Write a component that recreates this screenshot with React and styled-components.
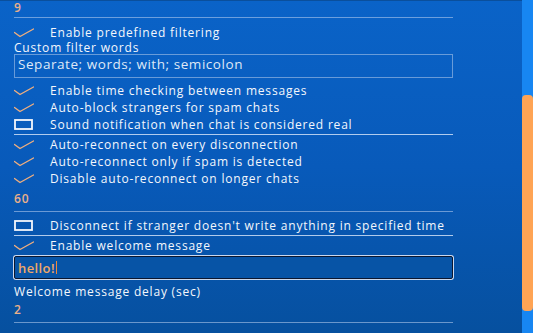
import React from 'react';
import styled, { createGlobalStyle } from 'styled-components';

const GlobalStyle = createGlobalStyle`
  html, body {
    margin: 0;
    padding: 0;
    overflow: hidden;
  }
  body {
    font-family: "Open Sans", "DejaVu Sans", sans-serif;
  }
`;

const Tick = () => (
  <svg width="20" height="10" viewBox="0 0 20 10">
    <path d="M0.5 4.5 L6 8.5 L19.5 1" fill="none" stroke="#f0ae7e" strokeWidth="1.4" strokeLinecap="round" strokeLinejoin="round" />
  </svg>
);

const EmptyBox = () => (
  <svg width="19" height="11" viewBox="0 0 19 11">
    <rect x="1" y="1" width="17" height="9" fill="none" stroke="#f4f7fc" strokeWidth="1.8" />
  </svg>
);

const Check = ({ checked, label, top }) => (
  <CheckRow $top={top}>
    <Indicator>{checked ? <Tick /> : <EmptyBox />}</Indicator>
    <span>{label}</span>
  </CheckRow>
);

const App = () => (
  <>
    <GlobalStyle />
    <Screen>
      <Panel>
        <NumberField $first>9</NumberField>
        <Check checked top={6} label="Enable predefined filtering" />
        <FieldLabel $top={1}>Custom filter words</FieldLabel>
        <TextBox>Separate; words; with; semicolon</TextBox>
        <Check checked top={4} label="Enable time checking between messages" />
        <Check checked label="Auto-block strangers for spam chats" />
        <Check label="Sound notification when chat is considered real" />
        <Divider />
        <Check checked top={1} label="Auto-reconnect on every disconnection" />
        <Check checked label="Auto-reconnect only if spam is detected" />
        <Check checked label="Disable auto-reconnect on longer chats" />
        <NumberField>60</NumberField>
        <Check top={5} label="Disconnect if stranger doesn't write anything in specified time" />
        <Divider />
        <Check checked top={1} label="Enable welcome message" />
        <FocusedInput>
          hello!<Caret />
        </FocusedInput>
        <FieldLabel $top={7}>Welcome message delay (sec)</FieldLabel>
        <NumberField>2</NumberField>
      </Panel>
      <ScrollTrack>
        <ScrollThumb />
      </ScrollTrack>
    </Screen>
  </>
);

const Screen = styled.div`
  display: flex;
  width: 533px;
  height: 333px;
  overflow: hidden;
  background: linear-gradient(180deg, #0a63c8 0%, #085aba 50%, #06509f 100%);
  box-shadow: inset 0 1px 0 #0a4f9c;
`;

const Panel = styled.div`
  flex: 1;
  display: flex;
  flex-direction: column;
  padding: 0 69px 0 14px;
  color: #f4f7fc;
  font-size: 12px;
  font-weight: 500;
  letter-spacing: 0.8px;
`;

const NumberField = styled.div`
  padding: ${p => (p.$first ? '2px 0 3px' : '6px 0')};
  line-height: 12px;
  height: 12px;
  color: #eab08a;
  font-weight: 600;
  border-bottom: 1px solid rgba(190, 210, 240, 0.55);
`;

const CheckRow = styled.div`
  display: flex;
  align-items: center;
  height: 17px;
  white-space: nowrap;
  margin-top: ${p => p.$top || 0}px;
`;

const Indicator = styled.div`
  width: 36px;
  flex-shrink: 0;
  display: flex;
  align-items: center;
`;

const FieldLabel = styled.div`
  line-height: 12px;
  margin-top: ${p => p.$top || 0}px;
`;

const TextBox = styled.div`
  height: 24px;
  box-sizing: border-box;
  border: 1px solid rgba(200, 215, 240, 0.5);
  padding: 1px 3px;
  font-size: 13.5px;
  font-weight: 400;
  line-height: 16px;
  letter-spacing: 0.55px;
  color: #dfe8f6;
`;

const Divider = styled.div`
  height: 1px;
  margin-top: 1px;
  background: rgba(220, 232, 250, 0.8);
`;

const FocusedInput = styled.div`
  display: flex;
  align-items: center;
  height: 23px;
  margin-top: 2px;
  box-sizing: border-box;
  padding: 0 3px;
  border: 1.5px solid #0b1730;
  border-radius: 2px;
  box-shadow: 0 0 0 1px #c9d8ef;
  background: #0754a6;
  color: #f0a868;
  font-size: 13px;
  font-weight: 600;
  letter-spacing: 0.4px;
`;

const Caret = styled.span`
  display: inline-block;
  width: 1.5px;
  height: 13px;
  margin-left: 1px;
  background: #f08a3a;
`;

const ScrollTrack = styled.div`
  width: 11px;
  padding-top: 95px;
  background: #1786f2;
  box-sizing: border-box;
`;

const ScrollThumb = styled.div`
  height: 216px;
  background: #ffa454;
  border-radius: 4px;
`;

export default App;
